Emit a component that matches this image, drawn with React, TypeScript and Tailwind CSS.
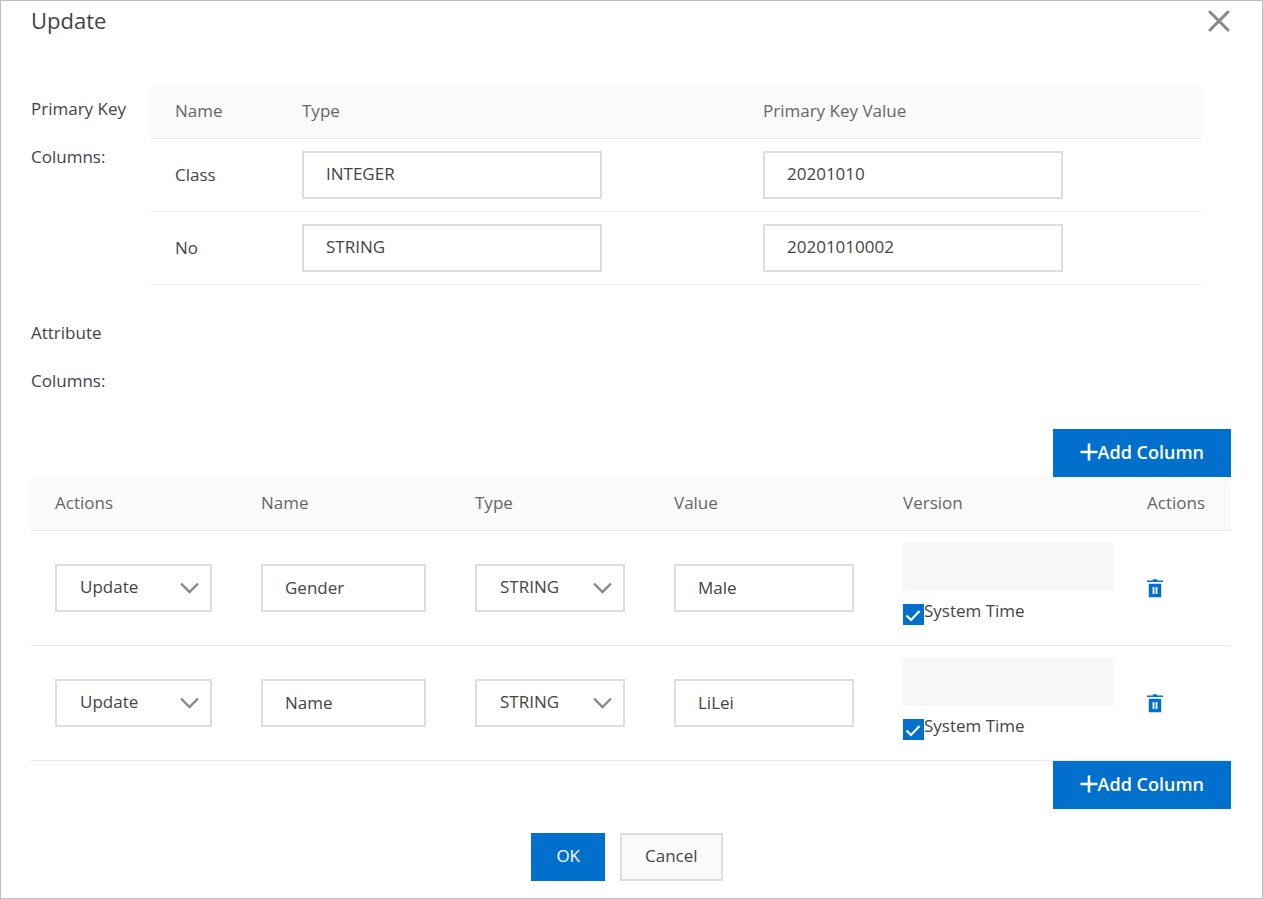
import { useState } from "react"

type KeyColumn = {
  name: string
  type: string
  value: string
}

type AttributeColumn = {
  id: number
  action: string
  name: string
  type: string
  value: string
  systemTime: boolean
}

const keyColumns: KeyColumn[] = [
  { name: "Class", type: "INTEGER", value: "20201010" },
  { name: "No", type: "STRING", value: "20201010002" },
]

const initialAttributes: AttributeColumn[] = [
  { id: 1, action: "Update", name: "Gender", type: "STRING", value: "Male", systemTime: true },
  { id: 2, action: "Update", name: "Name", type: "STRING", value: "LiLei", systemTime: true },
]

const fieldClass =
  "block h-12 w-full border-2 border-[#dedede] bg-white pl-[22px] pr-2 pb-[2px] outline-none focus:border-[#0070cc]"
const headClass = "px-6 text-left font-normal text-[#666]"

function Select({
  label,
  value,
  options,
  onChange,
}: {
  label: string
  value: string
  options: string[]
  onChange: (value: string) => void
}) {
  return (
    <div className="relative">
      <select
        aria-label={label}
        value={value}
        onChange={(e) => onChange(e.target.value)}
        className="block h-12 w-full appearance-none border-2 border-[#dedede] bg-white pb-[2px] pl-[23px] outline-none focus:border-[#0070cc]"
      >
        {options.map((option) => (
          <option key={option}>{option}</option>
        ))}
      </select>
      <svg
        className="pointer-events-none absolute top-[18px] right-[13px] h-3 w-[19px]"
        viewBox="0 0 19 12"
        fill="none"
        stroke="#888"
        strokeWidth="2.4"
      >
        <path d="M1 1.5 9.5 10 18 1.5" />
      </svg>
    </div>
  )
}

function AddColumnButton({ onClick }: { onClick: () => void }) {
  return (
    <button
      type="button"
      onClick={onClick}
      className="flex h-12 items-center bg-[#0070cc] px-[27px] pb-[2px] text-[18px] font-semibold text-white"
    >
      <svg className="h-[18px] w-[18px]" viewBox="0 0 18 18" stroke="#fff" strokeWidth="2.6">
        <path d="M9 0.5v17M0.5 9h17" />
      </svg>
      Add Column
    </button>
  )
}

function TrashIcon() {
  return (
    <svg className="h-[19px] w-4" viewBox="0 0 16 19" fill="#0070cc">
      <path d="M5.5 1.4 6.3 0.2h3.4l.8 1.2H16v1.7H0V1.4z" />
      <path
        fillRule="evenodd"
        d="M1.8 4.8h12.4v13.4H1.8zM5.6 8v7h1.8V8zM8.6 8v7h1.8V8z"
      />
    </svg>
  )
}

export default function App() {
  const [attributes, setAttributes] = useState(initialAttributes)

  const update = (id: number, patch: Partial<AttributeColumn>) =>
    setAttributes((rows) => rows.map((row) => (row.id === id ? { ...row, ...patch } : row)))

  const addColumn = () =>
    setAttributes((rows) => [
      ...rows,
      { id: Date.now(), action: "Update", name: "", type: "STRING", value: "", systemTime: true },
    ])

  return (
    <div
      role="dialog"
      aria-labelledby="dialog-title"
      className="min-h-screen border border-[#bfbfbf] bg-white pr-[31px] pb-4 pl-[30px] font-['Open_Sans','Noto_Sans',sans-serif] text-[17px] leading-6 text-[#444]"
    >
      <header className="flex h-10 items-center justify-between">
        <h1 id="dialog-title" className="pb-[2px] text-[22px]">
          Update
        </h1>
        <button type="button" aria-label="Close" className="p-px">
          <svg
            className="h-[22px] w-[22px]"
            viewBox="0 0 22 22"
            stroke="#888"
            strokeWidth="3"
            strokeLinecap="round"
          >
            <path d="M2 2l18 18M20 2 2 20" />
          </svg>
        </button>
      </header>

      <section className="mt-11 flex pr-[30px]">
        <h2 className="w-[120px] shrink-0 pr-4 leading-[48px]">Primary Key Columns:</h2>
        <table className="w-full table-fixed">
          <thead>
            <tr className="h-[53px] border-b border-[#ebebeb] bg-[#fafafa]">
              <th className={`${headClass} w-[127px]`}>Name</th>
              <th className={`${headClass} w-[461px]`}>Type</th>
              <th className={headClass}>Primary Key Value</th>
            </tr>
          </thead>
          <tbody>
            {keyColumns.map((column) => (
              <tr key={column.name} className="h-[73px] border-b border-[#ebebeb]">
                <td className="px-6">{column.name}</td>
                <td className="px-6">
                  <input
                    aria-label={`${column.name} type`}
                    className={`${fieldClass} max-w-[300px]`}
                    value={column.type}
                    readOnly
                  />
                </td>
                <td className="px-6">
                  <input
                    aria-label={`${column.name} value`}
                    className={`${fieldClass} max-w-[300px]`}
                    value={column.value}
                    readOnly
                  />
                </td>
              </tr>
            ))}
          </tbody>
        </table>
      </section>

      <section className="mt-6">
        <h2 className="w-[120px] pr-4 leading-[48px]">Attribute Columns:</h2>
        <div className="mt-6 flex justify-end">
          <AddColumnButton onClick={addColumn} />
        </div>
        <table className="w-full table-fixed">
          <thead>
            <tr className="h-[54px] border-b border-[#ebebeb] bg-[#fafafa]">
              <th className={`${headClass} w-[206px]`}>Actions</th>
              <th className={`${headClass} w-[214px]`}>Name</th>
              <th className={`${headClass} w-[199px]`}>Type</th>
              <th className={`${headClass} w-[229px]`}>Value</th>
              <th className={headClass}>Version</th>
              <th className={`${headClass} w-[108px]`}>Actions</th>
            </tr>
          </thead>
          <tbody>
            {attributes.map((row) => (
              <tr key={row.id} className="h-[115px] border-b border-[#ebebeb]">
                <td className="pr-[25px] pl-6">
                  <Select
                    label="Action"
                    value={row.action}
                    options={["Update", "Delete"]}
                    onChange={(action) => update(row.id, { action })}
                  />
                </td>
                <td className="pr-[25px] pl-6">
                  <input
                    aria-label="Name"
                    className={fieldClass}
                    value={row.name}
                    onChange={(e) => update(row.id, { name: e.target.value })}
                  />
                </td>
                <td className="pr-[25px] pl-6">
                  <Select
                    label="Type"
                    value={row.type}
                    options={["STRING", "INTEGER", "DOUBLE", "BOOLEAN", "BINARY"]}
                    onChange={(type) => update(row.id, { type })}
                  />
                </td>
                <td className="pr-[25px] pl-6">
                  <input
                    aria-label="Value"
                    className={fieldClass}
                    value={row.value}
                    onChange={(e) => update(row.id, { value: e.target.value })}
                  />
                </td>
                <td className="pr-2 pl-6">
                  <input
                    aria-label="Version"
                    className="block h-12 w-full max-w-[210px] bg-[#f7f7f7] px-6"
                    disabled={row.systemTime}
                  />
                  <label className="flex h-[42px] items-start">
                    <span className="relative mt-[13px] h-[21px] w-[21px]">
                      <input
                        type="checkbox"
                        checked={row.systemTime}
                        onChange={(e) => update(row.id, { systemTime: e.target.checked })}
                        className="block h-[21px] w-[21px] appearance-none border-2 border-[#dedede] checked:border-[#0070cc] checked:bg-[#0070cc]"
                      />
                      <svg
                        className="pointer-events-none absolute inset-0"
                        viewBox="0 0 21 21"
                        fill="none"
                        stroke="#fff"
                        strokeWidth="2.2"
                      >
                        <path d="M3.5 11.5 8 16l8.5-9" />
                      </svg>
                    </span>
                    <span className="leading-[40px]">System Time</span>
                  </label>
                </td>
                <td className="px-6">
                  <button
                    type="button"
                    aria-label={`Delete ${row.name}`}
                    className="block"
                    onClick={() => setAttributes((rows) => rows.filter((r) => r.id !== row.id))}
                  >
                    <TrashIcon />
                  </button>
                </td>
              </tr>
            ))}
          </tbody>
        </table>
        <div className="flex justify-end">
          <AddColumnButton onClick={addColumn} />
        </div>
      </section>

      <footer className="mt-6 flex justify-center gap-[15px] pr-2">
        <button type="button" className="h-12 bg-[#0070cc] px-[25px] pb-[2px] text-white">
          OK
        </button>
        <button
          type="button"
          className="h-12 border-2 border-[#dedede] bg-[#fafafa] px-[23px] pb-[2px]"
        >
          Cancel
        </button>
      </footer>
    </div>
  )
}
